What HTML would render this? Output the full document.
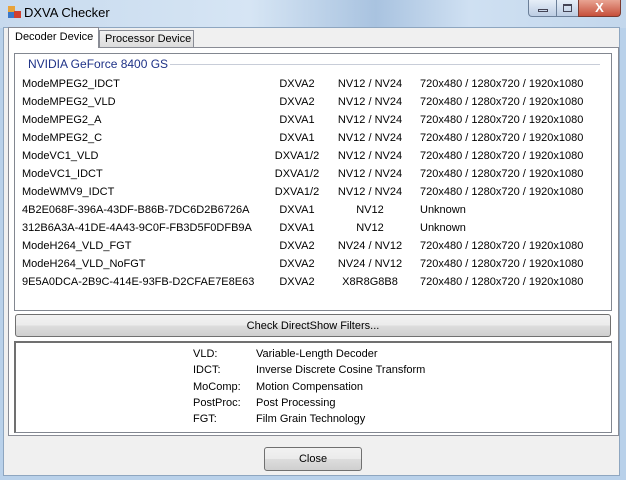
<!DOCTYPE html>
<html><head><style>
*{margin:0;padding:0;box-sizing:border-box}
body{width:626px;height:480px;overflow:hidden;background:#b9d1ea;font-family:"Liberation Sans",sans-serif;font-size:11px;color:#000;position:relative}
.a{position:absolute;white-space:nowrap}
.title{left:0;top:0;width:626px;height:28px;background:linear-gradient(90deg,#c7daee 0%,#d6e5f4 40%,#a9c3e0 60%,#cfe0f2 75%,#c3d7ec 100%)}
.client{left:3px;top:27px;width:617px;height:449px;background:#f0f0f0;border:1px solid #8ea6c0}
.row{position:absolute;left:22px;width:580px;height:18px;line-height:18px;white-space:nowrap}
.row span{white-space:nowrap}
.c2{position:absolute;left:236px;width:78px;text-align:center}
.c3{position:absolute;left:310px;width:76px;text-align:center}
.c4{position:absolute;left:398px}
</style></head><body>
<div class="a title"></div>
<div class="a" style="left:8px;top:6px;width:7px;height:7px;background:#e8a33a"></div>
<div class="a" style="left:14px;top:11px;width:7px;height:7px;background:#d04030"></div>
<div class="a" style="left:8px;top:12px;width:6px;height:6px;background:#3a78c8"></div>
<div class="a" style="left:24px;top:5px;font-size:13px;color:#000">DXVA Checker</div>
<div class="a" style="left:528px;top:0;width:29px;height:17px;border:1px solid #6b7f99;border-top:none;border-radius:0 0 0 4px;background:linear-gradient(#e6eef8,#bccde3)"><div class="a" style="left:9px;top:9px;width:10px;height:3px;border:1px solid #445"></div></div>
<div class="a" style="left:556px;top:0;width:23px;height:17px;border:1px solid #6b7f99;border-top:none;background:linear-gradient(#e6eef8,#bccde3)"><div class="a" style="left:6px;top:4px;width:9px;height:8px;border:1px solid #445;border-top-width:2px"></div></div>
<div class="a" style="left:578px;top:0;width:43px;height:17px;border:1px solid #7a3a30;border-top:none;border-radius:0 0 4px 0;background:linear-gradient(#e8a493,#c7503b);color:#fff;font-weight:bold;text-align:center;line-height:15px;font-size:13px">X</div>
<div class="a client"></div>
<div class="a" style="left:8px;top:47px;width:611px;height:389px;background:#fff;border:1px solid #898c95"></div>
<div class="a" style="left:8px;top:27px;width:91px;height:21px;background:#fff;border:1px solid #898c95;border-bottom:none;padding:3px 0 0 6px">Decoder Device</div>
<div class="a" style="left:99px;top:30px;width:95px;height:17px;background:linear-gradient(#f2f2f2,#dcdcdc);border:1px solid #898c95;border-bottom:none;padding:2px 0 0 5px">Processor Device</div>
<div class="a" style="left:14px;top:53px;width:598px;height:258px;border:1px solid #828790;background:#fff"></div>
<div class="a" style="left:28px;top:57px;color:#1e3287;font-size:12px;background:#fff;padding-right:4px">NVIDIA GeForce 8400 GS</div>
<div class="a" style="left:170px;top:64px;width:430px;height:1px;background:#c8cdd8"></div>
<div class="row" style="top:75px"><span>ModeMPEG2_IDCT</span><span class="c2">DXVA2</span><span class="c3">NV12 / NV24</span><span class="c4">720x480 / 1280x720 / 1920x1080</span></div>
<div class="row" style="top:93px"><span>ModeMPEG2_VLD</span><span class="c2">DXVA2</span><span class="c3">NV12 / NV24</span><span class="c4">720x480 / 1280x720 / 1920x1080</span></div>
<div class="row" style="top:111px"><span>ModeMPEG2_A</span><span class="c2">DXVA1</span><span class="c3">NV12 / NV24</span><span class="c4">720x480 / 1280x720 / 1920x1080</span></div>
<div class="row" style="top:129px"><span>ModeMPEG2_C</span><span class="c2">DXVA1</span><span class="c3">NV12 / NV24</span><span class="c4">720x480 / 1280x720 / 1920x1080</span></div>
<div class="row" style="top:147px"><span>ModeVC1_VLD</span><span class="c2">DXVA1/2</span><span class="c3">NV12 / NV24</span><span class="c4">720x480 / 1280x720 / 1920x1080</span></div>
<div class="row" style="top:165px"><span>ModeVC1_IDCT</span><span class="c2">DXVA1/2</span><span class="c3">NV12 / NV24</span><span class="c4">720x480 / 1280x720 / 1920x1080</span></div>
<div class="row" style="top:183px"><span>ModeWMV9_IDCT</span><span class="c2">DXVA1/2</span><span class="c3">NV12 / NV24</span><span class="c4">720x480 / 1280x720 / 1920x1080</span></div>
<div class="row" style="top:201px"><span>4B2E068F-396A-43DF-B86B-7DC6D2B6726A</span><span class="c2">DXVA1</span><span class="c3">NV12</span><span class="c4">Unknown</span></div>
<div class="row" style="top:219px"><span>312B6A3A-41DE-4A43-9C0F-FB3D5F0DFB9A</span><span class="c2">DXVA1</span><span class="c3">NV12</span><span class="c4">Unknown</span></div>
<div class="row" style="top:237px"><span>ModeH264_VLD_FGT</span><span class="c2">DXVA2</span><span class="c3">NV24 / NV12</span><span class="c4">720x480 / 1280x720 / 1920x1080</span></div>
<div class="row" style="top:255px"><span>ModeH264_VLD_NoFGT</span><span class="c2">DXVA2</span><span class="c3">NV24 / NV12</span><span class="c4">720x480 / 1280x720 / 1920x1080</span></div>
<div class="row" style="top:273px"><span>9E5A0DCA-2B9C-414E-93FB-D2CFAE7E8E63</span><span class="c2">DXVA2</span><span class="c3">X8R8G8B8</span><span class="c4">720x480 / 1280x720 / 1920x1080</span></div>
<div class="a" style="left:15px;top:314px;width:596px;height:23px;border:1px solid #707070;border-radius:3px;background:linear-gradient(#f2f2f2 0%,#ebebeb 50%,#dddddd 51%,#cfcfcf 100%);text-align:center;line-height:22px">Check DirectShow Filters...</div>
<div class="a" style="left:14px;top:341px;width:598px;height:92px;border:1px solid #828790;border-top:2px solid #707070;border-left:2px solid #707070;background:#fff"></div>
<div class="a" style="left:193px;top:346px;line-height:16.3px">VLD:<br>IDCT:<br>MoComp:<br>PostProc:<br>FGT:</div>
<div class="a" style="left:256px;top:346px;line-height:16.3px">Variable-Length Decoder<br>Inverse Discrete Cosine Transform<br>Motion Compensation<br>Post Processing<br>Film Grain Technology</div>
<div class="a" style="left:264px;top:447px;width:98px;height:24px;border:1px solid #707070;border-radius:3px;background:linear-gradient(#f2f2f2 0%,#ebebeb 50%,#dddddd 51%,#cfcfcf 100%);text-align:center;line-height:23px">Close</div>
</body></html>
